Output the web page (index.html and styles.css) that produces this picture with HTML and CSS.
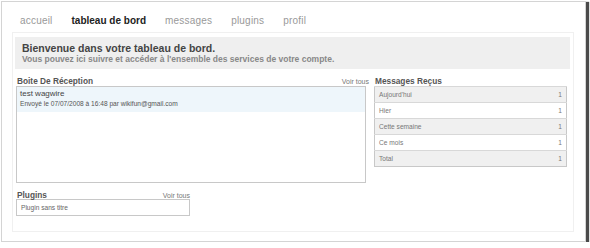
FILE: index.html
```html
<!DOCTYPE html>
<html lang="fr">
<head>
  <meta charset="UTF-8" />
  <title>Tableau de bord</title>
  <link rel="stylesheet" href="styles.css">
</head>
<body>
  <div class="frame">
    <ul class="nav">
      <li>accueil</li>
      <li class="active">tableau de bord</li>
      <li>messages</li>
      <li>plugins</li>
      <li>profil</li>
    </ul>

    <div class="panel">
      <div class="welcome">
        <h1>Bienvenue dans votre tableau de bord.</h1>
        <p>Vous pouvez ici suivre et accéder à l'ensemble des services de votre compte.</p>
      </div>

      <div class="columns">
        <div class="inbox">
          <div class="section-head">
            <h2>Boite De Réception</h2>
            <a href="#">Voir tous</a>
          </div>
          <div class="box inbox-list">
            <div class="message">
              <div class="subject">test wagwire</div>
              <div class="meta">Envoyé le 07/07/2008 à 16:48 par wikifun@gmail.com</div>
            </div>
          </div>
        </div>

        <div class="stats">
          <div class="section-head">
            <h2>Messages Reçus</h2>
          </div>
          <table class="stats-table">
            <tr><td>Aujourd'hui</td><td class="num">1</td></tr>
            <tr><td>Hier</td><td class="num">1</td></tr>
            <tr><td>Cette semaine</td><td class="num">1</td></tr>
            <tr><td>Ce mois</td><td class="num">1</td></tr>
            <tr><td>Total</td><td class="num">1</td></tr>
          </table>
        </div>
      </div>

      <div class="plugins">
        <div class="section-head">
          <h2>Plugins</h2>
          <a href="#">Voir tous</a>
        </div>
        <div class="box plugin-list">Plugin sans titre</div>
      </div>
    </div>
  </div>
</body>
</html>
```

FILE: styles.css
```css
* {
  box-sizing: border-box;
}

body {
  margin: 0;
  background-color: #ffffff;
  font-family: "Liberation Sans", Arial, sans-serif;
  color: #444;
}

.frame {
  margin: 1px 0 0 1px;
  width: 585px;
  height: 241px;
  background-color: #fff;
  border: 1px solid #d4d4d4;
  box-shadow: 2px 2px 1px 1px #4a4a4a;
}

.nav {
  list-style: none;
  margin: 0;
  padding: 13px 0 5px 18px;
  height: 30px;
  display: flex;
  font-size: 10px;
  line-height: 12px;
  letter-spacing: 0.2px;
}

.nav li {
  color: #999;
  margin-right: 19px;
}

.nav li.active {
  color: #222;
  font-weight: bold;
  letter-spacing: 0;
}

.panel {
  margin-left: 10px;
  width: 562px;
  border: 1px solid #f0f0f0;
  padding: 4px 3px 15px 2px;
}

.welcome {
  background-color: #efefef;
  height: 32px;
  padding: 5px 7px 0;
}

.welcome h1 {
  margin: 0;
  font-size: 10.5px;
  line-height: 12px;
  color: #444;
}

.welcome p {
  margin: 0;
  font-size: 8.5px;
  line-height: 10px;
  font-weight: bold;
  color: #888;
}

.columns {
  display: flex;
  gap: 5px;
  padding-left: 1px;
  margin-top: 7px;
}

.section-head {
  display: flex;
  justify-content: space-between;
  align-items: baseline;
  height: 10px;
  padding-left: 1px;
}

.section-head h2 {
  margin: 0;
  font-size: 8.3px;
  line-height: 10px;
  color: #555;
}

.section-head a {
  font-size: 7px;
  color: #777;
  text-decoration: none;
}

.inbox {
  width: 353px;
}

.box {
  border: 1px solid #c8c8c8;
  background-color: #fff;
}

.inbox-list {
  width: 350px;
  height: 97px;
}

.message {
  background-color: #eef6fb;
  height: 25px;
  padding: 2px 3px 0;
}

.message .subject {
  font-size: 8px;
  line-height: 10px;
  color: #444;
}

.message .meta {
  font-size: 6.6px;
  line-height: 10px;
  color: #555;
}

.stats {
  width: 193px;
}

.stats-table {
  width: 193px;
  border-collapse: collapse;
  border: 1px solid #c8c8c8;
  font-size: 6.6px;
  color: #777;
}

.stats-table td {
  height: 16px;
  padding: 0 4px;
  border-top: 1px solid #d8d8d8;
}

.stats-table tr:nth-child(odd) td {
  background-color: #f0f0f0;
}

.stats-table td.num {
  text-align: right;
}

.plugins {
  width: 174px;
  margin: 7px 0 0 1px;
}

.plugins .section-head {
  height: 9px;
}

.plugin-list {
  height: 17px;
  padding: 3px 4px 0;
  font-size: 6.6px;
  line-height: 10px;
  color: #666;
}
```
